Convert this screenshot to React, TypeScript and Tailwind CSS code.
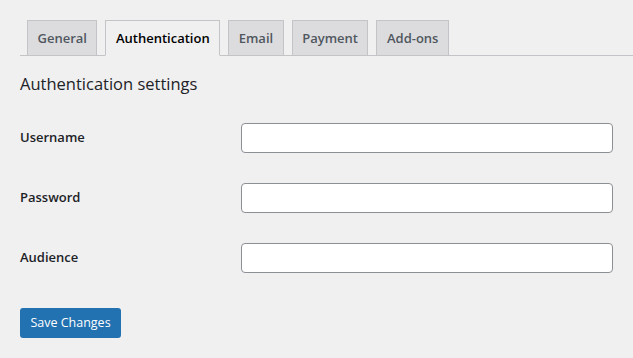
import * as React from 'react';

const tabs = ['General', 'Authentication', 'Email', 'Payment', 'Add-ons'];
const fields = ['Username', 'Password', 'Audience'];

export default function App() {
  const active = 'Authentication';

  return (
    <div
      className="h-[358px] w-[633px] overflow-hidden bg-[#f0f0f1] pl-5 pt-5 text-[#1d2327]"
      style={{ fontFamily: '"Open Sans", "Noto Sans", sans-serif' }}
    >
      <nav className="flex h-[36px] gap-2 border-b border-[#c3c4c7] pl-[7px]">
        {tabs.map((tab) => (
          <a
            key={tab}
            className={
              tab === active
                ? '-mb-px flex h-[36px] items-center border border-[#c3c4c7] border-b-[#f0f0f1] bg-[#f0f0f1] px-[9.5px] pt-[2px] text-[13px] font-semibold text-black'
                : '-mb-px flex h-[36px] items-center border border-[#c3c4c7] bg-[#dcdcde] px-[9.5px] pt-[2px] text-[13px] font-semibold text-[#50575e]'
            }
          >
            {tab}
          </a>
        ))}
      </nav>

      <h2 className="mt-4 text-[16.5px] leading-[23px] font-medium">Authentication settings</h2>

      <div className="mt-[13px]">
        {fields.map((field) => (
          <div key={field} className="flex h-[60px] items-center">
            <label className="w-[221px] text-[13px] font-semibold">{field}</label>
            <input
              type={field === 'Password' ? 'password' : 'text'}
              className="h-[30px] w-[372px] rounded-[4px] border border-[#8c8f94] bg-white px-2"
            />
          </div>
        ))}
      </div>

      <button className="mt-5 flex h-[30px] w-[101px] items-center justify-center rounded-[3px] bg-[#2271b1] text-[12.5px] text-white">
        Save Changes
      </button>
    </div>
  );
}
